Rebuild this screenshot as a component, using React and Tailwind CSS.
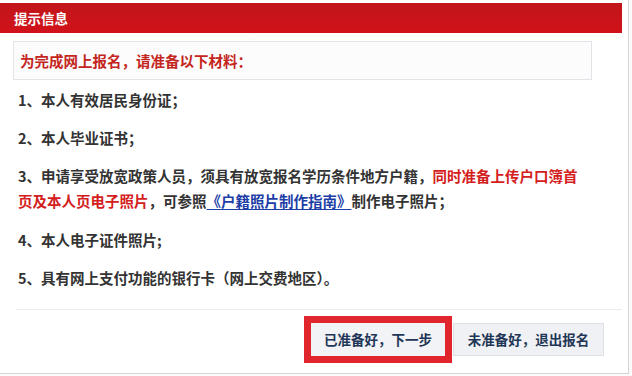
import React from 'react'

const items = [
  { no: '1', text: '本人有效居民身份证；' },
  { no: '2', text: '本人毕业证书；' },
]

const App = () => {
  return (
    <div
      className="relative h-[376px] w-[632px] overflow-hidden bg-[#fbfbfb]"
      style={{ fontFamily: '"Noto Sans CJK SC", "Noto Sans", sans-serif' }}
    >
      <div className="h-[374px] w-[629px] border-r border-b border-[#d4d4d4] bg-white pt-[3px] pr-[6px]">
        {/* header */}
        <div className="flex h-[30px] items-center bg-gradient-to-b from-[#c0161b] to-[#d2111a] pl-[14px] text-[13.5px] font-bold text-white">
          提示信息
        </div>

        {/* notice */}
        <div className="ml-[13px] mt-[8px] flex h-[39px] w-[579px] items-center border border-[#e1e4e8] bg-[#fcfcfd] px-[6px] text-[14.5px] font-bold text-[#c4261d]">
          为完成网上报名，请准备以下材料：
        </div>

        {/* list */}
        <div className="mt-[7px] pl-[18px] text-[14.5px] font-semibold leading-[25px] text-[#333333]">
          {items.map((item) => (
            <div key={item.no} className="mb-[13px]">
              {item.no}、{item.text}
            </div>
          ))}
          <div className="mb-[14px]">
            <div className="whitespace-nowrap">
              3、申请享受放宽政策人员，须具有放宽报名学历条件地方户籍，
              <span className="font-bold text-[#d3201c]">同时准备上传户口簿首</span>
            </div>
            <div className="whitespace-nowrap">
              <span className="font-bold text-[#d3201c]">页及本人页电子照片</span>
              ，可参照
              <span className="text-[#1c3ea6] underline underline-offset-2">《户籍照片制作指南》</span>
              制作电子照片；
            </div>
          </div>
          <div className="mb-[13px]">4、本人电子证件照片;</div>
          <div>5、具有网上支付功能的银行卡（网上交费地区）。</div>
        </div>

        {/* footer */}
        <div className="ml-[16px] mt-[19px] border-t border-[#ededed] pt-[6px]">
          <div className="flex items-center justify-end pr-[18px]">
            <div className="border-[7px] border-[#e0262c]">
              <button className="flex h-[33px] w-[134px] items-center justify-center bg-[#f1f3f6] text-[13.5px] font-semibold text-[#1f3656]">
                已准备好，下一步
              </button>
            </div>
            <button className="ml-px flex h-[33px] w-[151px] items-center justify-center border border-[#dde0e4] bg-[#eff1f4] text-[13.5px] font-semibold text-[#1f3656]">
              未准备好，退出报名
            </button>
          </div>
        </div>
      </div>
    </div>
  )
}

export default App
